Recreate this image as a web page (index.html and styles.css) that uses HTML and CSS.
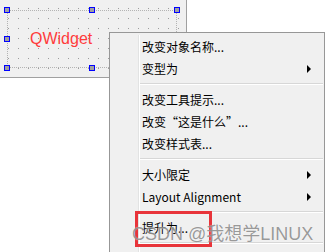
FILE: index.html
```html
<!DOCTYPE html>
<html lang="en">
<head>
    <meta charset="UTF-8">
    <title>QWidget context menu</title>
    <link rel="stylesheet" href="styles.css">
</head>
<body>

<div class="screen">
    <div class="form">
        <div class="widget">
            <span class="widget-name">QWidget</span>
            <span class="handle h-tl"></span>
            <span class="handle h-tm"></span>
            <span class="handle h-tr"></span>
            <span class="handle h-ml"></span>
            <span class="handle h-mr"></span>
            <span class="handle h-bl"></span>
            <span class="handle h-bm"></span>
            <span class="handle h-br"></span>
        </div>
    </div>

    <ul class="menu">
        <li class="item">改变对象名称...</li>
        <li class="item sub">变型为</li>
        <li class="sep"></li>
        <li class="item">改变工具提示...</li>
        <li class="item">改变“这是什么”...</li>
        <li class="item">改变样式表...</li>
        <li class="sep"></li>
        <li class="item sub">大小限定</li>
        <li class="item sub">Layout Alignment</li>
        <li class="sep"></li>
        <li class="item">提升为...</li>
        <li class="sep"></li>
        <li class="item"></li>
    </ul>

    <div class="mark"></div>
    <div class="watermark">CSDN @我想学LINUX</div>
</div>

</body>
</html>
```

FILE: styles.css
```css
body {
    margin: 0;
    padding: 0;
    background-color: #fff;
    font-family: "Noto Sans CJK SC", "Liberation Sans", sans-serif;
}

.screen {
    position: relative;
    width: 330px;
    height: 252px;
    overflow: hidden;
}

/* designer form with grid dots */
.form {
    width: 186px;
    height: 77px;
    box-sizing: content-box;
    padding: 0;
    border-right: 1px solid #a0a0a0;
    border-bottom: 1px solid #a0a0a0;
    background-color: #9c9c9c;
    background-image:
        linear-gradient(to bottom, transparent 1px, #f0f0f0 1px),
        linear-gradient(to right, transparent 1px, #f0f0f0 1px);
    background-size: 10px 10px, 10px 10px;
    background-position: 8px 8px, 8px 8px;
    display: flex;
    align-items: flex-start;
}

.widget {
    position: relative;
    margin: 10px 0 0 7px;
    width: 170px;
    height: 58px;
    box-sizing: border-box;
    border: 1px dotted #b4b4b4;
    display: flex;
    align-items: center;
    padding-left: 22px;
}

.widget-name {
    font-family: "Liberation Sans", Arial, sans-serif;
    font-size: 16px;
    color: #ff3c3c;
    margin-top: -1px;
}

.handle {
    position: absolute;
    width: 6px;
    height: 6px;
    box-sizing: border-box;
    border: 1px solid #0000ff;
    background-color: #a0a0a0;
}

.h-tl { left: -4px; top: -4px; }
.h-tm { left: 81px; top: -4px; }
.h-tr { left: 166px; top: -4px; }
.h-ml { left: -4px; top: 25px; }
.h-mr { left: 166px; top: 25px; }
.h-bl { left: -4px; top: 54px; }
.h-bm { left: 81px; top: 54px; }
.h-br { left: 166px; top: 54px; }

/* popup menu */
.menu {
    position: absolute;
    left: 109px;
    top: 32px;
    width: 216px;
    height: 240px;
    box-sizing: border-box;
    margin: 0;
    padding: 3px 0 0 0;
    list-style: none;
    background-color: #f0f0f0;
    border: 1px solid #979797;
}

.menu::before {
    content: "";
    position: absolute;
    left: 28px;
    top: 2px;
    bottom: 0;
    width: 1px;
    border-left: 1px solid #e2e3e3;
    background-color: #fff;
}

.item {
    position: relative;
    height: 22px;
    line-height: 22px;
    padding-left: 32px;
    font-size: 12px;
    color: #000;
}

.sub::after {
    content: "";
    position: absolute;
    right: 13px;
    top: 7px;
    border-top: 4px solid transparent;
    border-bottom: 4px solid transparent;
    border-left: 4px solid #000;
}

.sep {
    height: 9px;
    margin: 0 1px 0 30px;
    box-sizing: border-box;
    padding-top: 3px;
}

.sep::before {
    content: "";
    display: block;
    height: 1px;
    background-color: #d7d7d7;
    border-bottom: 1px solid #fff;
}

/* annotation box */
.mark {
    position: absolute;
    left: 135px;
    top: 211px;
    width: 77px;
    height: 36px;
    box-sizing: border-box;
    border: 3px solid #e8343a;
}

.watermark {
    position: absolute;
    left: 132px;
    top: 225px;
    font-family: "Liberation Sans", "Noto Sans CJK SC", sans-serif;
    font-size: 18px;
    line-height: 18px;
    color: rgba(110, 110, 110, 0.7);
    text-shadow: 0 0 1px rgba(255, 255, 255, 0.8);
    white-space: nowrap;
}
```
